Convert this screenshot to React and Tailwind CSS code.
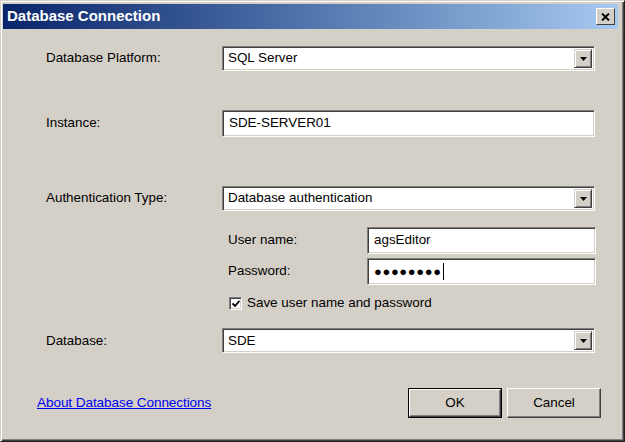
import React from 'react';

const sunken =
  'bg-white border border-t-[#808080] border-l-[#808080] border-b-white border-r-white shadow-[inset_1px_1px_0_#404040,inset_-1px_-1px_0_#d4d0c8]';

function DropArrow() {
  return (
    <div className="w-[18px] h-full bg-[#d4d0c8] border border-t-[#d4d0c8] border-l-[#d4d0c8] border-b-[#404040] border-r-[#404040] shadow-[inset_1px_1px_0_#fff,inset_-1px_-1px_0_#808080] flex items-center justify-center">
      <svg width="7" height="4" viewBox="0 0 7 4">
        <path d="M0 0h7L3.5 4z" fill="#000" />
      </svg>
    </div>
  );
}

function Select({ value }) {
  return (
    <div className={`${sunken} w-[373px] h-[25px] flex items-stretch p-[2px]`}>
      <div className="flex-1 flex items-center pl-[3px] text-black">{value}</div>
      <DropArrow />
    </div>
  );
}

function TextBox({ value, w = 'w-[373px]', children }) {
  return (
    <div className={`${sunken} ${w} h-[27px] flex items-center pl-[6px] text-black`}>
      {value}
      {children}
    </div>
  );
}

function Button({ label, primary }) {
  const base =
    'w-[94px] h-[30px] flex items-center justify-center text-black bg-[#d4d0c8]';
  if (primary) {
    return (
      <div className={`${base} border border-black`}>
        <div className="w-full h-full flex items-center justify-center border border-t-white border-l-white border-b-[#404040] border-r-[#404040] shadow-[inset_-1px_-1px_0_#808080]">
          {label}
        </div>
      </div>
    );
  }
  return (
    <div className={`${base} border border-t-white border-l-white border-b-[#404040] border-r-[#404040] shadow-[inset_-1px_-1px_0_#808080]`}>
      {label}
    </div>
  );
}

export default function App() {
  return (
    <div
      className="w-[625px] h-[442px] bg-[#d4d0c8] border border-t-[#d4d0c8] border-l-[#d4d0c8] border-b-[#202020] border-r-[#202020] shadow-[inset_1px_1px_0_#fff,inset_-1px_-1px_0_#404040,inset_-2px_-2px_0_#808080] p-[2px] pr-[6px] pb-[5px] flex flex-col text-[13.4px]"
      style={{ fontFamily: '"Liberation Sans", Arial, sans-serif' }}
    >
      <div className="h-[25px] mt-[1px] bg-gradient-to-r from-[#0a246a] to-[#a6caf0] flex items-center justify-between pl-[4px] pr-[3px]">
        <span className="text-white font-bold text-[15px]">Database Connection</span>
        <div className="w-[19px] h-[17px] bg-[#d4d0c8] border border-t-white border-l-white border-b-[#404040] border-r-[#404040] flex items-center justify-center">
          <svg width="9" height="8" viewBox="0 0 9 8">
            <path d="M1 0.5L8 7.5M8 0.5L1 7.5" stroke="#000" strokeWidth="1.9" />
          </svg>
        </div>
      </div>

      <div className="flex flex-col pl-[43px] text-black">
        <div className="flex items-center mt-[17px]">
          <div className="w-[176px]">Database Platform:</div>
          <Select value="SQL Server" />
        </div>

        <div className="flex items-center mt-[39px]">
          <div className="w-[176px]">Instance:</div>
          <TextBox value="SDE-SERVER01" />
        </div>

        <div className="flex items-center mt-[49px]">
          <div className="w-[176px]">Authentication Type:</div>
          <Select value="Database authentication" />
        </div>

        <div className="flex flex-col pl-[182px]">
          <div className="flex items-center mt-[16px]">
            <div className="w-[139px]">User name:</div>
            <TextBox value="agsEditor" w="w-[229px]" />
          </div>
          <div className="flex items-center mt-[4px]">
            <div className="w-[139px]">Password:</div>
            <TextBox w="w-[229px]">
              <span className="tracking-[0.6px] text-[13px]">●●●●●●●●</span>
              <span className="w-px h-[17px] bg-black ml-[1px]" />
            </TextBox>
          </div>
          <div className="flex items-center mt-[8px] pl-[1px]">
            <div className={`${sunken} w-[13px] h-[13px] flex items-center justify-center`}>
              <svg width="8" height="7" viewBox="0 0 8 7">
                <path d="M0.5 3.5L3 6L7.5 0.8" stroke="#000" strokeWidth="1.8" fill="none" />
              </svg>
            </div>
            <span className="ml-[5px]">Save user name and password</span>
          </div>
        </div>

        <div className="flex items-center mt-[15px]">
          <div className="w-[176px]">Database:</div>
          <Select value="SDE" />
        </div>
      </div>

      <div className="flex items-center mt-[35px] pl-[34px]">
        <span className="text-[#0000ee] underline text-[13.6px] tracking-[-0.1px]">About Database Connections</span>
        <div className="ml-auto flex gap-[5px] mr-[17px]">
          <Button label="OK" primary />
          <Button label="Cancel" />
        </div>
      </div>
    </div>
  );
}
